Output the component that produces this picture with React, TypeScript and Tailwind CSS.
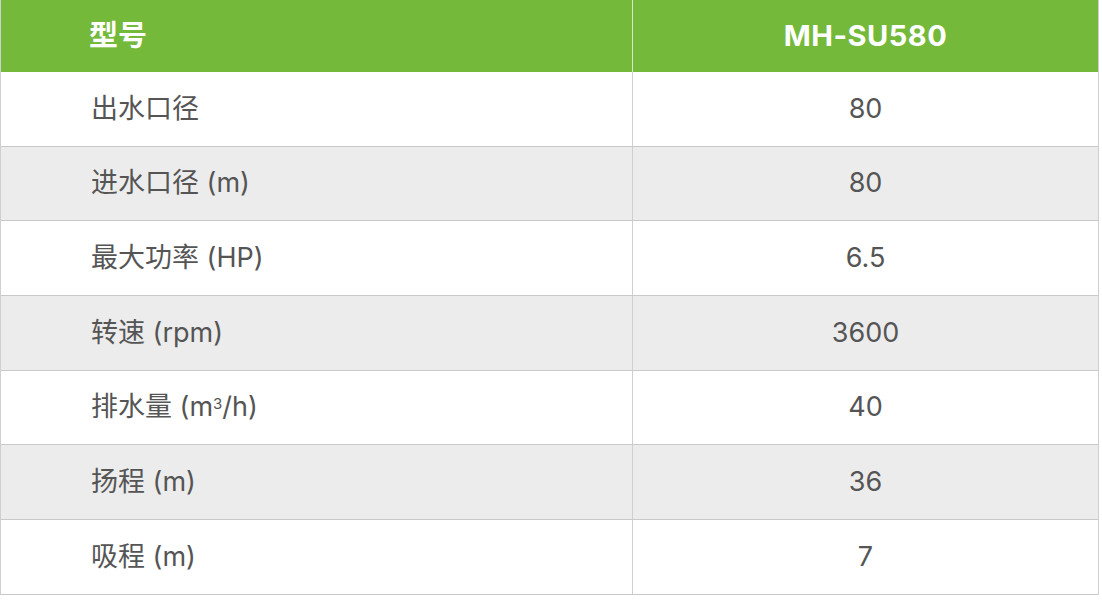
import React from "react";

const rows: { label: React.ReactNode; value: string }[] = [
  { label: "出水口径", value: "80" },
  { label: "进水口径 (m)", value: "80" },
  { label: "最大功率 (HP)", value: "6.5" },
  { label: "转速 (rpm)", value: "3600" },
  {
    label: (
      <>
        排水量 (m<sup className="text-[15px] relative -top-[3px]">3</sup>/h)
      </>
    ),
    value: "40",
  },
  { label: "扬程 (m)", value: "36" },
  { label: "吸程 (m)", value: "7" },
];

export default function App() {
  return (
    <div
      className="w-[1102px] h-[600px] bg-white"
      style={{ fontFamily: 'Inter, "Noto Sans CJK SC", sans-serif' }}
    >
      <div className="w-[1099px] border-r border-l border-[#cfcfcf]">
        {/* header */}
        <div className="grid grid-cols-[632px_1fr] h-[72px] bg-[#74b93a] text-white font-bold text-[29px]">
          <div className="flex items-center pl-[88px] border-r border-[#d7e9c8]">型号</div>
          <div className="flex items-center justify-center tracking-[0.5px]">MH-SU580</div>
        </div>

        {rows.map((r, i) => (
          <div
            key={i}
            className={
              "grid grid-cols-[632px_1fr] h-[74.667px] border-b border-[#c9c9c9] text-[27px] text-[#555555] " +
              (i % 2 === 1 ? "bg-[#ececec]" : "bg-white")
            }
          >
            <div className="flex items-center pl-[90px] border-r border-[#cfcfcf]">{r.label}</div>
            <div className="flex items-center justify-center">{r.value}</div>
          </div>
        ))}
      </div>
    </div>
  );
}
